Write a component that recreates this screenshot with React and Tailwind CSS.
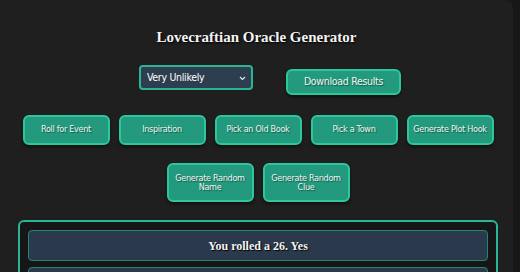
import React from 'react';

const btn =
  "bg-[#239a7d] border-2 border-[#2cc79b] rounded-md text-[#eef6f3] tracking-[-0.3px] [text-shadow:1px_1px_1px_rgba(0,0,0,0.45)] shadow-[0_2px_3px_rgba(0,0,0,0.5)]";

const App = () => {
  const rowOne = ['Roll for Event', 'Inspiration', 'Pick an Old Book', 'Pick a Town', 'Generate Plot Hook'];
  const rowTwo = [['Generate Random', 'Name'], ['Generate Random', 'Clue']];

  return (
    <div className="w-[520px] h-[272px] bg-[#171717] flex overflow-hidden">
      <div
        className="w-[513px] h-full bg-[#1f1f1f] rounded-tr-lg flex flex-col items-center"
        style={{ fontFamily: '"DejaVu Sans Condensed", "DejaVu Sans", sans-serif' }}
      >
        {/* Title */}
        <h1
          className="mt-[27px] text-[15px] font-bold text-[#f4f4f4] leading-[20px] [text-shadow:1px_1px_2px_#000]"
          style={{ fontFamily: '"Liberation Serif", serif' }}
        >
          Lovecraftian Oracle Generator
        </h1>

        {/* Controls */}
        <div className="mt-[18px] flex items-start gap-[33px] ml-[27px]">
          <div className="w-[114px] h-[25px] rounded-[4px] border-2 border-[#2bb592] bg-[#2c3e50] flex items-center justify-between pl-[6px] pr-[5px] text-[10.5px] tracking-[-0.3px] text-white">
            <span>Very Unlikely</span>
            <svg width="7" height="5" viewBox="0 0 7 5" className="mt-[1px]">
              <path d="M1 1 L3.5 3.5 L6 1" stroke="#dfe6ee" strokeWidth="1.2" fill="none" />
            </svg>
          </div>
          <button className={`${btn} mt-[4px] w-[115px] h-[26px] text-[10.5px]`}>Download Results</button>
        </div>

        {/* Row one */}
        <div className="mt-[20px] flex gap-[9px] ml-[3px]">
          {rowOne.map((t) => (
            <button key={t} className={`${btn} w-[87px] h-[30px] text-[9px]`}>{t}</button>
          ))}
        </div>

        {/* Row two */}
        <div className="mt-[18px] flex gap-[9px] ml-[3px]">
          {rowTwo.map(([a, b]) => (
            <button key={b} className={`${btn} w-[87px] h-[39px] text-[9px] leading-[9px]`}>
              {a}
              <br />
              {b}
            </button>
          ))}
        </div>

        {/* Results */}
        <div className="mt-[18px] w-[480px] ml-[3px] border-2 border-[#2bb592] rounded-[6px] bg-[#161616] px-[8px] pt-[8px] flex flex-col gap-[6px]">
          <div
            className="h-[31px] rounded-[4px] border border-[#23866e] bg-[#2a3a4c] flex items-center justify-center text-[12px] font-bold text-[#f2f2f2] [text-shadow:1px_1px_1px_#000]"
            style={{ fontFamily: '"Liberation Serif", serif' }}
          >
            You rolled a 26. Yes
          </div>
          <div className="h-[31px] rounded-[4px] border border-[#23866e] bg-[#2a3a4c]" />
        </div>
      </div>
    </div>
  );
};

export default App;
